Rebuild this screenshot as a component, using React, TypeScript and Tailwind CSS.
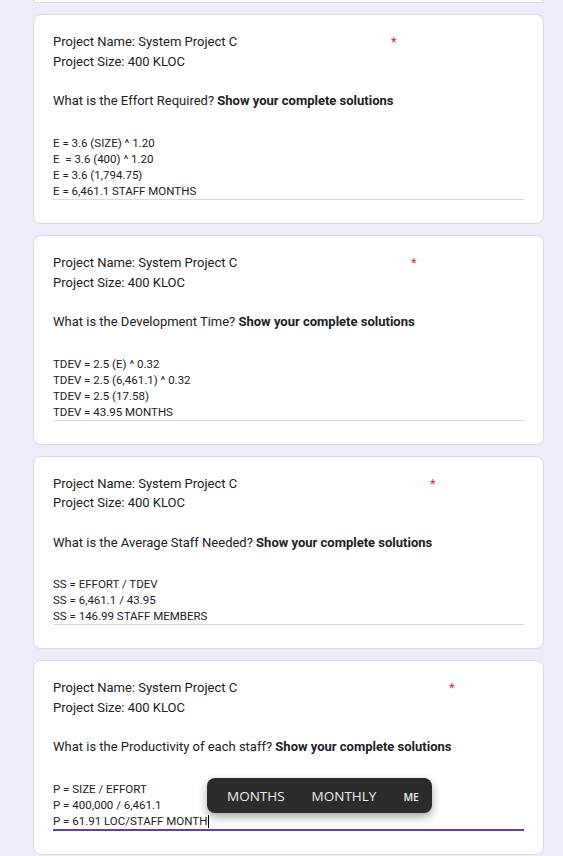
const questions = [
  {
    id: 1,
    starAt: "w-[338px]",
    question: "What is the Effort Required?",
    answer: [
      "E = 3.6 (SIZE) ^ 1.20",
      "E  = 3.6 (400) ^ 1.20",
      "E = 3.6 (1,794.75)",
      "E = 6,461.1 STAFF MONTHS",
    ],
  },
  {
    id: 2,
    starAt: "w-[358px]",
    question: "What is the Development Time?",
    answer: [
      "TDEV = 2.5 (E) ^ 0.32",
      "TDEV = 2.5 (6,461.1) ^ 0.32",
      "TDEV = 2.5 (17.58)",
      "TDEV = 43.95 MONTHS",
    ],
  },
  {
    id: 3,
    starAt: "w-[377px]",
    question: "What is the Average Staff Needed?",
    answer: [
      "SS = EFFORT / TDEV",
      "SS = 6,461.1 / 43.95",
      "SS = 146.99 STAFF MEMBERS",
    ],
  },
];

function Title({ starAt, question }: { starAt: string; question: string }) {
  return (
    <div className="text-[13px] leading-[19.7px] text-[#202124]">
      <div className="flex">
        <span className={`${starAt} shrink-0`}>Project Name: System Project C</span>
        <span className="text-[#d93025]">*</span>
      </div>
      <div>Project Size: 400 KLOC</div>
      <div className="h-[19.7px]" />
      <div>
        {question} <span className="font-bold">Show your complete solutions</span>
      </div>
    </div>
  );
}

export default function App() {
  return (
    <main
      className="min-h-screen bg-[#f0ebf8] px-[33px] pb-4"
      style={{ fontFamily: "Roboto, 'Liberation Sans', sans-serif" }}
    >
      {/* tail of the previous card */}
      <div className="h-[3px] w-[511px] rounded-b-lg border-x border-b border-[#dadce0] bg-white" />

      <div className="mt-[11px] flex w-[511px] flex-col gap-[11px]">
        {questions.map((q) => (
          <section
            key={q.id}
            className="rounded-lg border border-[#dadce0] bg-white px-[19px] pt-[17px] pb-[23px]"
          >
            <Title starAt={q.starAt} question={q.question} />
            <div className="mt-[24px] border-b border-[#dadce0] text-[11.5px] leading-[16px] text-[#202124] whitespace-pre">
              {q.answer.map((line) => (
                <div key={line}>{line}</div>
              ))}
            </div>
          </section>
        ))}

        <section className="relative rounded-lg border border-[#dadce0] bg-white px-[19px] pt-[17px] pb-[23px]">
          <Title starAt="w-[396px]" question="What is the Productivity of each staff?" />
          <div className="mt-[24px] border-b-2 border-[#673ab7] text-[11.5px] leading-[16px] text-[#202124]">
            <div>P = SIZE / EFFORT</div>
            <div>P = 400,000 / 6,461.1</div>
            <div className="flex items-center">
              P = 61.91 LOC/STAFF MONTH
              <span className="ml-px inline-block h-[13px] w-px bg-black" />
            </div>
          </div>

          {/* autocomplete suggestion bar */}
          <div
            className="absolute left-[173px] top-[117px] flex h-[35px] w-[225px] items-center rounded-lg bg-[#2b2b2b] pl-[20px] text-[#ececec] shadow-[0_4px_10px_rgba(0,0,0,0.35)]"
            style={{ fontFamily: "'Open Sans', 'Noto Sans', sans-serif" }}
          >
            <span className="text-[13.5px]">MONTHS</span>
            <span className="ml-[27px] text-[13.5px]">MONTHLY</span>
            <span className="ml-[27px] mt-[3px] text-[10.5px] font-semibold">ME</span>
          </div>
        </section>
      </div>
    </main>
  );
}
